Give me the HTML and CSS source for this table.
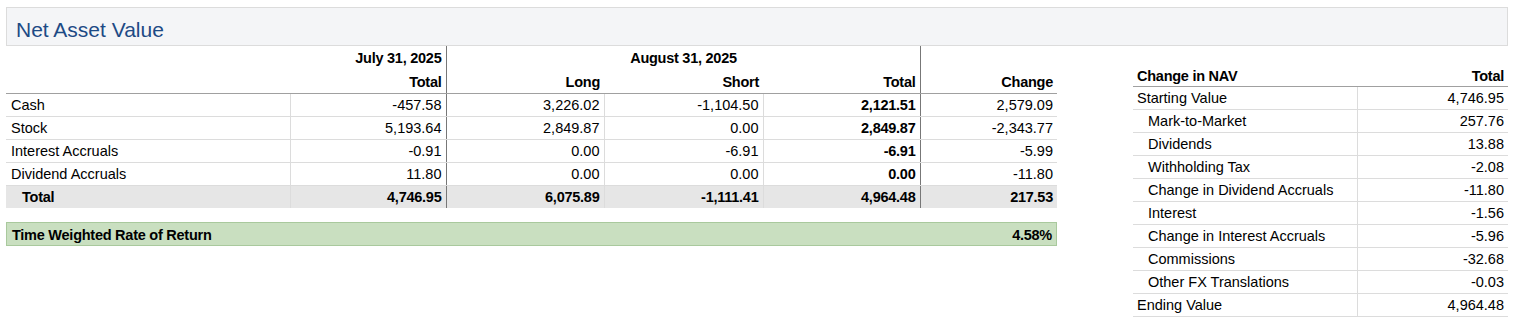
FILE: index.html
```html
<!DOCTYPE html>
<html lang="en">
<head>
  <meta charset="UTF-8">
  <title>Net Asset Value</title>
  <meta name="viewport" content="width=device-width, initial-scale=1.0">
  <link rel="stylesheet" href="styles.css">
</head>
<body>
<div class="page">
  <div class="nav-header">
    <h2 class="nav-title">Net Asset Value</h2>
  </div>

  <div class="nav-body">
    <div class="nav-main">
      <table class="nav-table">
        <colgroup>
          <col style="width: 284px">
          <col style="width: 156px">
          <col style="width: 158px">
          <col style="width: 159px">
          <col style="width: 157px">
          <col style="width: 137px">
        </colgroup>
        <thead>
          <tr class="date-row">
            <th></th>
            <th class="num dark">July 31, 2025</th>
            <th class="center dark" colspan="3">August 31, 2025</th>
            <th></th>
          </tr>
          <tr class="head-row">
            <th></th>
            <th class="num dark">Total</th>
            <th class="num">Long</th>
            <th class="num">Short</th>
            <th class="num dark">Total</th>
            <th class="num">Change</th>
          </tr>
        </thead>
        <tbody>
          <tr>
            <td>Cash</td>
            <td class="num dark">-457.58</td>
            <td class="num">3,226.02</td>
            <td class="num">-1,104.50</td>
            <td class="num dark bold">2,121.51</td>
            <td class="num last">2,579.09</td>
          </tr>
          <tr>
            <td>Stock</td>
            <td class="num dark">5,193.64</td>
            <td class="num">2,849.87</td>
            <td class="num">0.00</td>
            <td class="num dark bold">2,849.87</td>
            <td class="num last">-2,343.77</td>
          </tr>
          <tr>
            <td>Interest Accruals</td>
            <td class="num dark">-0.91</td>
            <td class="num">0.00</td>
            <td class="num">-6.91</td>
            <td class="num dark bold">-6.91</td>
            <td class="num last">-5.99</td>
          </tr>
          <tr>
            <td>Dividend Accruals</td>
            <td class="num dark">11.80</td>
            <td class="num">0.00</td>
            <td class="num">0.00</td>
            <td class="num dark bold">0.00</td>
            <td class="num last">-11.80</td>
          </tr>
          <tr class="total-row">
            <td class="indent">Total</td>
            <td class="num dark">4,746.95</td>
            <td class="num">6,075.89</td>
            <td class="num">-1,111.41</td>
            <td class="num dark">4,964.48</td>
            <td class="num last">217.53</td>
          </tr>
        </tbody>
      </table>

      <div class="twr">
        <span>Time Weighted Rate of Return</span>
        <span>4.58%</span>
      </div>
    </div>

    <table class="change-table">
      <colgroup>
        <col style="width: 224px">
        <col style="width: 151px">
      </colgroup>
      <thead>
        <tr>
          <th>Change in NAV</th>
          <th class="num">Total</th>
        </tr>
      </thead>
      <tbody>
        <tr><td>Starting Value</td><td class="num">4,746.95</td></tr>
        <tr><td class="indent">Mark-to-Market</td><td class="num">257.76</td></tr>
        <tr><td class="indent">Dividends</td><td class="num">13.88</td></tr>
        <tr><td class="indent">Withholding Tax</td><td class="num">-2.08</td></tr>
        <tr><td class="indent">Change in Dividend Accruals</td><td class="num">-11.80</td></tr>
        <tr><td class="indent">Interest</td><td class="num">-1.56</td></tr>
        <tr><td class="indent">Change in Interest Accruals</td><td class="num">-5.96</td></tr>
        <tr><td class="indent">Commissions</td><td class="num">-32.68</td></tr>
        <tr><td class="indent">Other FX Translations</td><td class="num">-0.03</td></tr>
        <tr><td>Ending Value</td><td class="num">4,964.48</td></tr>
      </tbody>
    </table>
  </div>
</div>
</body>
</html>
```

FILE: styles.css
```css
body {
  font-family: "Liberation Sans", Arial, sans-serif;
  font-size: 14.5px;
  color: #000;
  background: #fff;
  margin: 0;
}
.page {
  padding: 7px 0 0 6px;
  width: 1502px;
}
.nav-header {
  background: #f4f5f7;
  border: 1px solid #dcdcdc;
  height: 33px;
  padding: 4px 0 0 9px;
}
.nav-title {
  margin: 0;
  font-size: 21px;
  font-weight: normal;
  line-height: 36px;
  color: #1d4a85;
}
.nav-body {
  display: flex;
  align-items: flex-start;
}
.nav-main {
  width: 1051px;
}
table {
  border-collapse: collapse;
  table-layout: fixed;
}
th, td {
  height: 22px;
  padding: 0 4px 0 5px;
  line-height: 22px;
  white-space: nowrap;
  text-align: left;
}
th {
  font-weight: bold;
  letter-spacing: -0.25px;
}
.num {
  text-align: right;
}
.center {
  text-align: center;
}
.bold {
  font-weight: bold;
  letter-spacing: -0.25px;
}
.nav-table {
  width: 1051px;
}
.nav-table .date-row th {
  height: 25px;
  line-height: 25px;
}
.nav-table td {
  border-right: 1px solid #dcdcdc;
  border-bottom: 1px solid #dcdcdc;
}
.nav-table td.last {
  border-right: none;
}
.nav-table .dark {
  border-right: 1px solid #777;
}
.nav-table .head-row th {
  border-bottom: 1px solid #a0a0a0;
}
.nav-table .head-row th:first-child {
  border-bottom: none;
}
.nav-table tbody tr:first-child td:first-child {
  border-top: 1px solid #a0a0a0;
}
.total-row td {
  background: #e6e6e6;
  font-weight: bold;
  letter-spacing: -0.25px;
  border-bottom: none;
}
.nav-table td.indent {
  padding-left: 16px;
}
.twr {
  display: flex;
  justify-content: space-between;
  margin-top: 14px;
  height: 21px;
  line-height: 22px;
  padding: 1px 4px 0 5px;
  background: #c9dfc0;
  border: 1px solid #a9c99d;
  font-weight: bold;
  letter-spacing: -0.25px;
}
.change-table {
  width: 375px;
  margin: 20px 0 0 76px;
}
.change-table th {
  height: 20px;
  line-height: 20px;
  padding-left: 4px;
  padding-right: 4px;
  border-bottom: 1px solid #a0a0a0;
}
.change-table td {
  padding-left: 4px;
  border-bottom: 1px solid #dcdcdc;
}
.change-table td:first-child {
  border-right: 1px solid #dcdcdc;
}
.change-table td.indent {
  padding-left: 15px;
}
```
